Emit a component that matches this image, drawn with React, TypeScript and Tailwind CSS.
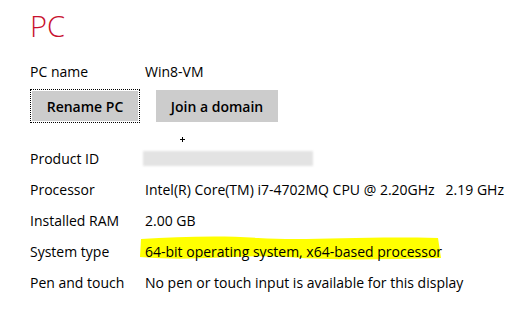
export default function App() {
  const rows = [
    { label: 'Processor', value: 'Intel(R) Core(TM) i7-4702MQ CPU @ 2.20GHz\u00a0\u00a0\u00a02.19 GHz' },
    { label: 'Installed RAM', value: '2.00 GB' },
  ];

  return (
    <div className="w-[515px] h-[316px] bg-white overflow-hidden pl-[30px] font-['Open_Sans',sans-serif] text-black relative">
      <h1 className="mt-[6px] h-[40px] text-[29px] font-light leading-[40px] text-[#c8102e]">PC</h1>

      <div className="mt-[10px] flex items-center h-[30px] text-[14px]">
        <div className="w-[115px]">PC name</div>
        <div>Win8-VM</div>
      </div>

      {/* Buttons */}
      <div className="mt-[3px] flex items-center gap-[16px]">
        <div className="border border-dotted border-black p-px">
          <button className="h-[30px] w-[106px] bg-[#cccccc] text-[14px] font-semibold">Rename PC</button>
        </div>
        <button className="h-[32px] w-[122px] bg-[#cccccc] text-[14px] font-semibold">Join a domain</button>
      </div>

      {/* cursor mark */}
      <div className="absolute left-[180px] top-[137px] w-[5px] h-[5px]">
        <div className="absolute left-[2px] top-0 w-px h-[5px] bg-black" />
        <div className="absolute left-0 top-[2px] w-[5px] h-px bg-black" />
      </div>

      <div className="mt-[20px] flex flex-col text-[14px]">
        <div className="flex items-center h-[31px]">
          <div className="w-[113px]">Product ID</div>
          <div className="w-[170px] h-[15px] bg-[#e3e3e3] blur-[1px]" />
        </div>
        {rows.map((r) => (
          <div key={r.label} className="flex items-center h-[31px]">
            <div className="w-[115px]">{r.label}</div>
            <div>{r.value}</div>
          </div>
        ))}
        <div className="flex items-center h-[31px]">
          <div className="w-[115px]">System type</div>
          <div className="relative">
            <svg className="absolute left-[-7px] top-[-6px]" width="306" height="28" viewBox="0 0 306 28">
              <path
                d="M3 4 C 40 2, 80 0, 120 3 C 170 6, 220 1, 300 3 L 303 23 C 250 24, 200 26, 150 22 C 100 19, 60 27, 2 22 Z"
                fill="#ffff00"
              />
            </svg>
            <span className="relative">64-bit operating system, x64-based processor</span>
          </div>
        </div>
        <div className="flex items-center h-[31px]">
          <div className="w-[115px]">Pen and touch</div>
          <div>No pen or touch input is available for this display</div>
        </div>
      </div>
    </div>
  );
}
